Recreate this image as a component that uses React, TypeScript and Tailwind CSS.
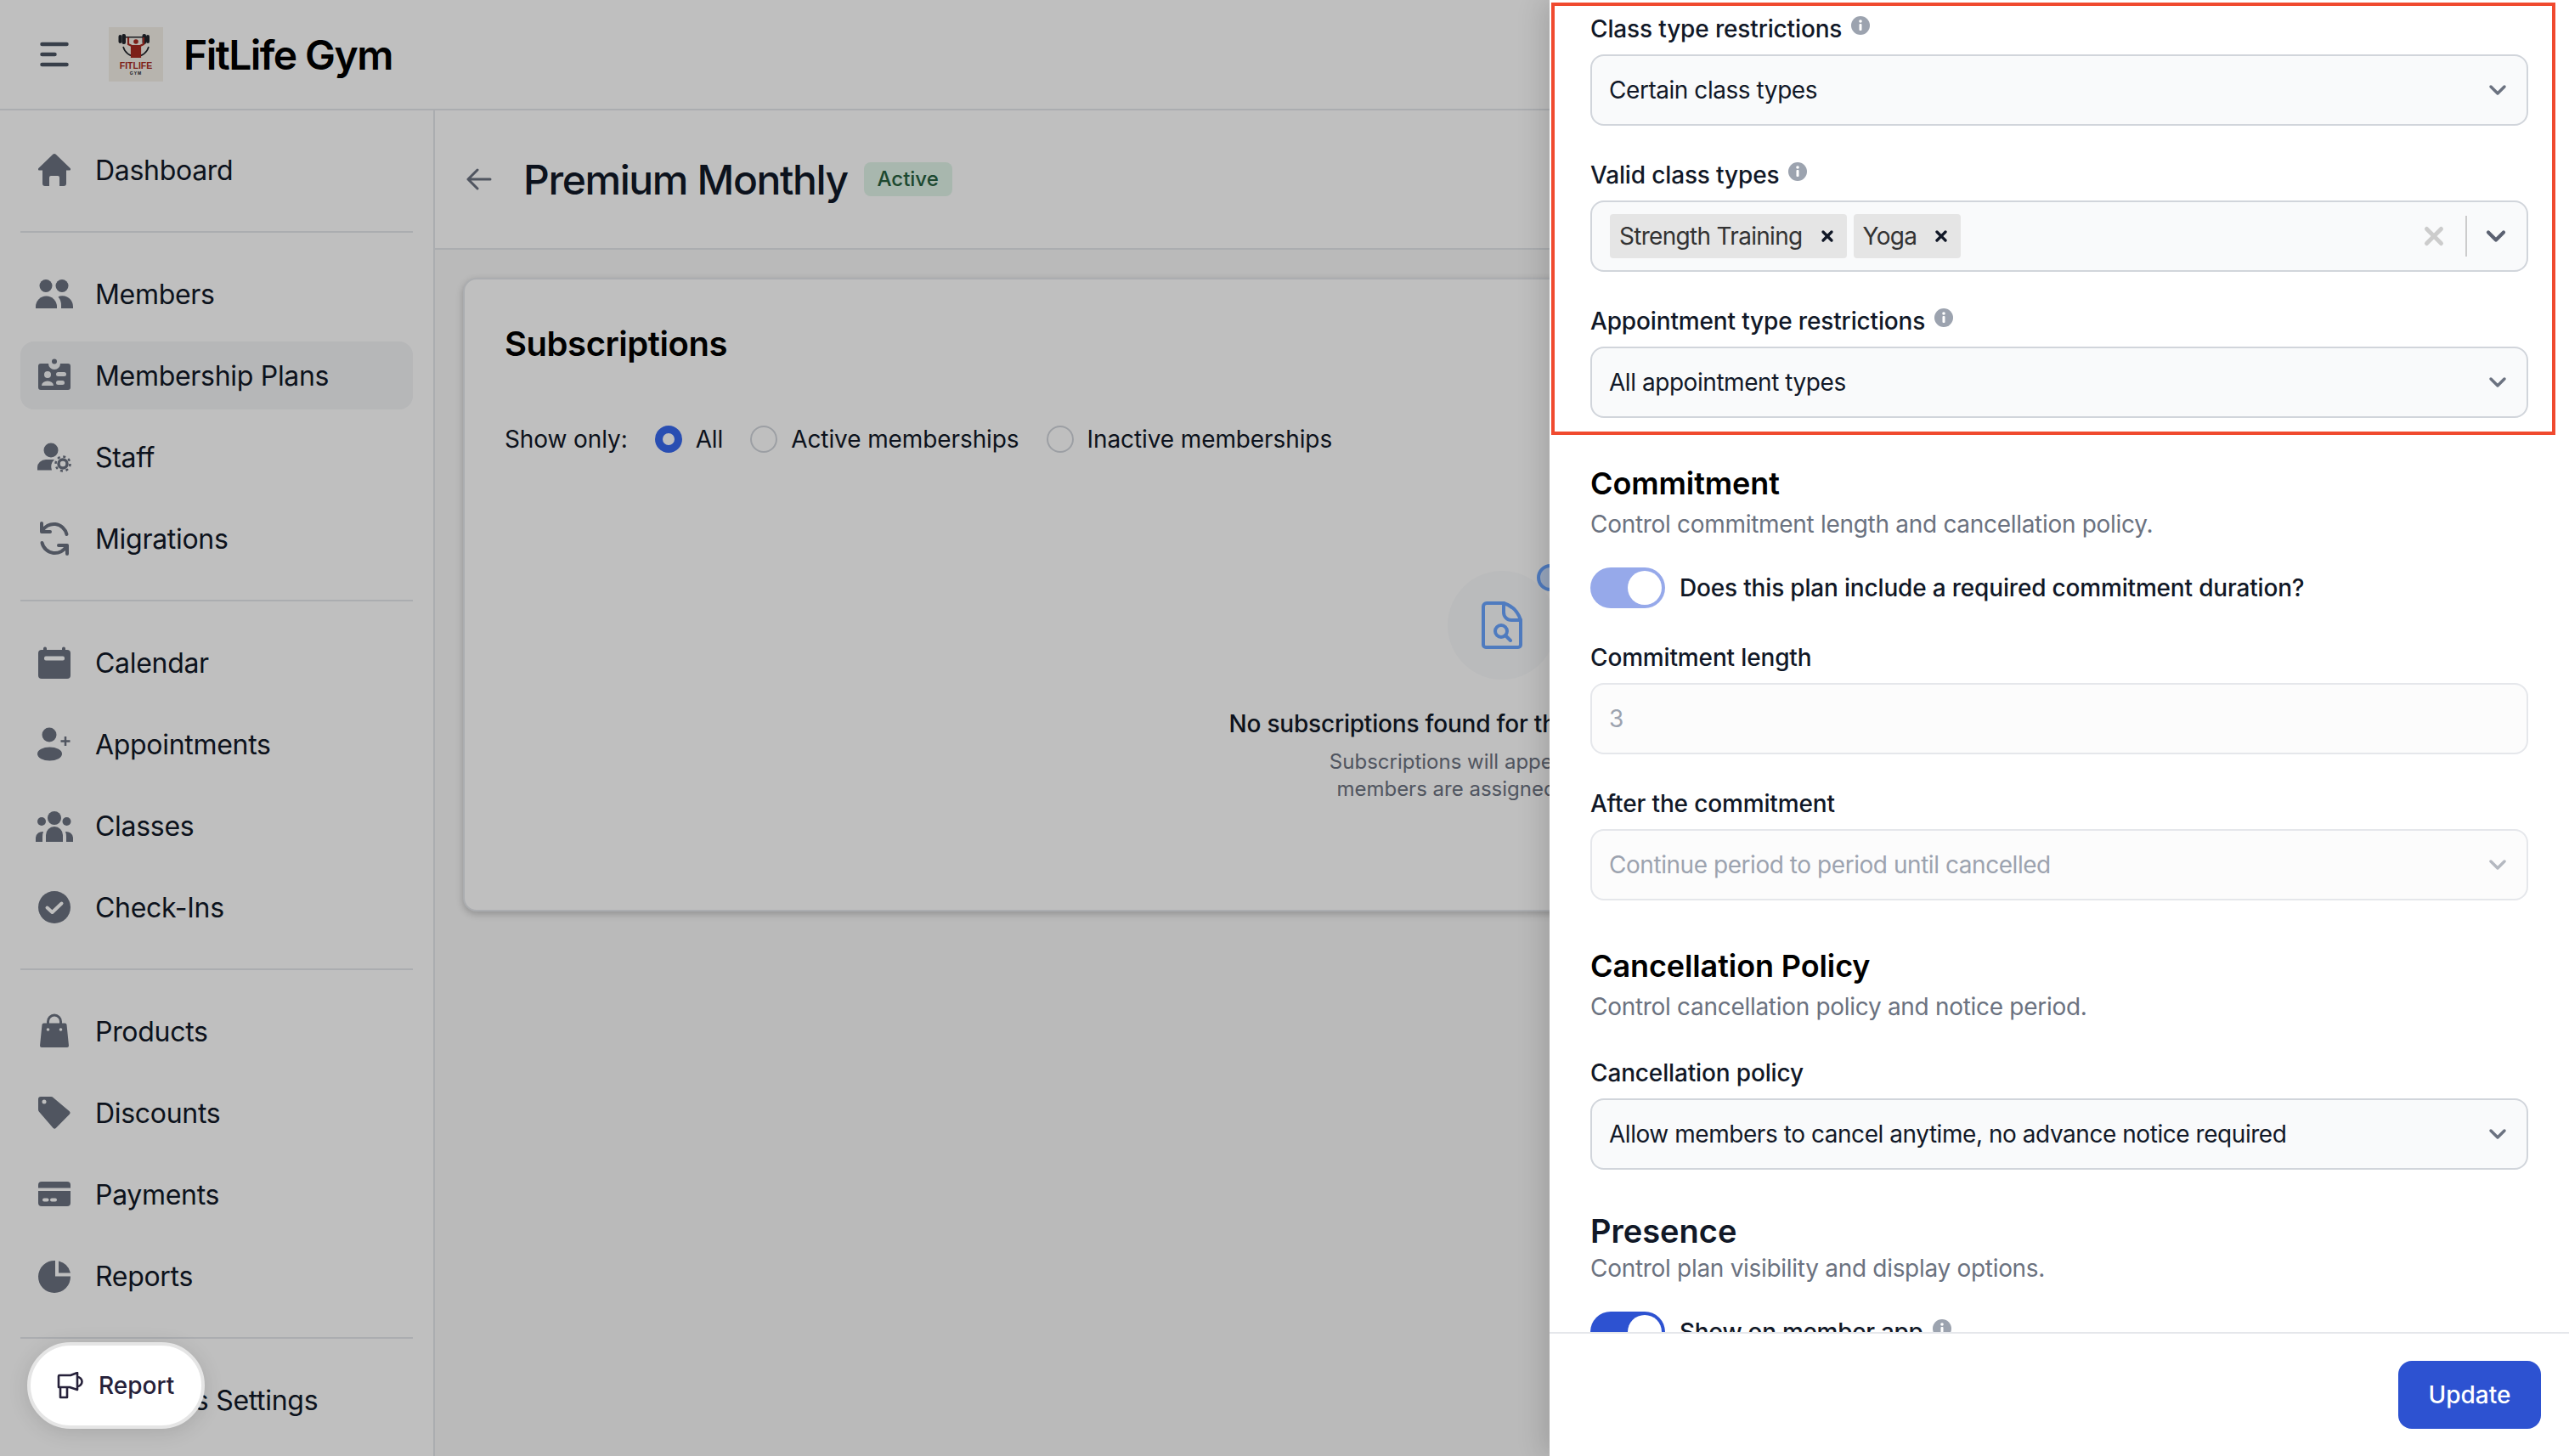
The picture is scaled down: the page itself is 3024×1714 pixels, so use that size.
import { ChevronDown, X } from 'lucide-react'
import type { ReactNode } from 'react'

const ICON = '#6b7280'

function Glyph({ children }: { children: ReactNode }) {
  return (
    <svg width="48" height="48" viewBox="0 0 48 48" fill={ICON} className="shrink-0">
      {children}
    </svg>
  )
}

const HomeIcon = () => (
  <Glyph>
    <path d="M24 5a2 2 0 0 1 1.5.6L42.6 22a1.5 1.5 0 0 1-1 2.6H38V40a3 3 0 0 1-3 3h-5V33a2 2 0 0 0-2-2h-8a2 2 0 0 0-2 2v10h-5a3 3 0 0 1-3-3V24.6H6.4a1.5 1.5 0 0 1-1-2.6L22.5 5.6A2 2 0 0 1 24 5Z" />
  </Glyph>
)

const MembersIcon = () => (
  <Glyph>
    <circle cx="14" cy="14.5" r="7.5" />
    <circle cx="33" cy="14.5" r="7.5" />
    <path d="M2 41v-2a12.5 12.5 0 0 1 25 0v2Z" />
    <path d="M30.500 26.600A12.500 12.500 0 0 1 46 39v2H32v-3a15 15 0 0 0-3.500-10.400Z" />
  </Glyph>
)

const PlansIcon = () => (
  <Glyph>
    <circle cx="24" cy="7.500" r="3" />
    <path d="M8 10h9a7 7 0 0 0 14 0h9a3 3 0 0 1 3 3v25a3 3 0 0 1-3 3H8a3 3 0 0 1-3-3V13a3 3 0 0 1 3-3Z" />
    <circle cx="16" cy="23" r="4" fill="#f3f4f6" />
    <path d="M9 36a7 5.500 0 0 1 14 0Z" fill="#f3f4f6" />
    <rect x="26" y="20" width="12" height="5" rx="2.500" fill="#f3f4f6" />
    <rect x="26" y="30" width="10" height="5" rx="2.500" fill="#f3f4f6" />
  </Glyph>
)

const StaffIcon = () => (
  <Glyph>
    <circle cx="20" cy="16" r="8.500" />
    <path d="M4 39.500V36a10 9 0 0 1 10-9h10a12 12 0 0 0-3 12.500Z" />
    <circle cx="34" cy="32" r="5" fill="none" stroke={ICON} strokeWidth="3.500" />
    <circle cx="34" cy="32" r="8.500" fill="none" stroke={ICON} strokeWidth="2.500" strokeDasharray="3 3.670" />
  </Glyph>
)

const MigrationsIcon = () => (
  <Glyph>
    <g fill="none" stroke={ICON} strokeWidth="4" strokeLinecap="round" strokeLinejoin="round">
      <path d="M9 6v10h10" />
      <path d="M9.500 15.500A15.500 15.500 0 0 1 38.500 19" />
      <path d="M39 42V32H29" />
      <path d="M38.500 32.500A15.500 15.500 0 0 1 9.500 29" />
    </g>
  </Glyph>
)

const CalendarIcon = () => (
  <Glyph>
    <rect x="11" y="5.500" width="4" height="8" rx="2" />
    <rect x="33" y="5.500" width="4" height="8" rx="2" />
    <rect x="5" y="9" width="38" height="34" rx="4" />
    <rect x="12" y="16.500" width="24" height="5" rx="2" fill="#fff" />
  </Glyph>
)

const AppointmentsIcon = () => (
  <Glyph>
    <circle cx="18" cy="13" r="8.500" />
    <ellipse cx="18.500" cy="35.500" rx="14.500" ry="8" />
    <path d="M37 15v11M31.500 20.500h11" stroke={ICON} strokeWidth="2.500" fill="none" />
  </Glyph>
)

const ClassesIcon = () => (
  <Glyph>
    <circle cx="24" cy="15" r="8" />
    <circle cx="9" cy="19" r="5" />
    <circle cx="38.500" cy="19" r="5" />
    <path d="M14 43V35a10 10 0 0 1 20 0v8Z" />
    <path d="M2 43v-5a8 8 0 0 1 9-7 16 16 0 0 0-1 6v6Z" />
    <path d="M46 43v-5a8 8 0 0 0-9-7 16 16 0 0 1 1 6v6Z" />
  </Glyph>
)

const CheckIcon = () => (
  <Glyph>
    <circle cx="24" cy="24" r="19" />
    <path d="M15.500 24.500l6 5.500 11-10.500" fill="none" stroke="#fff" strokeWidth="4" strokeLinecap="round" strokeLinejoin="round" />
  </Glyph>
)

const ProductsIcon = () => (
  <Glyph>
    <path d="M16.500 17v-4.500a7.500 7.500 0 0 1 15 0V17" fill="none" stroke={ICON} strokeWidth="3" />
    <path d="M11.500 14.500h25a2 2 0 0 1 2 1.800L41 41a2 2 0 0 1-2 2H9a2 2 0 0 1-2-2l2.500-24.700a2 2 0 0 1 2-1.800Z" />
    <circle cx="16.500" cy="22" r="1.800" fill="#fff" />
    <circle cx="31.500" cy="22" r="1.800" fill="#fff" />
  </Glyph>
)

const DiscountsIcon = () => (
  <Glyph>
    <path d="M8 5h12a4 4 0 0 1 2.800 1.200l19 16a2.500 2.500 0 0 1 0 3.600L26 41.800a2.500 2.500 0 0 1-3.600 0L6.200 23A4 4 0 0 1 5 20.200V8a3 3 0 0 1 3-3Z" />
    <circle cx="12" cy="11" r="2.500" fill="#fff" />
  </Glyph>
)

const PaymentsIcon = () => (
  <Glyph>
    <path d="M9 9h30a4 4 0 0 1 4 4v3.500H5V13a4 4 0 0 1 4-4Z" />
    <path d="M5 20h38v14a4 4 0 0 1-4 4H9a4 4 0 0 1-4-4Z" />
    <rect x="10" y="28.500" width="7.500" height="4" rx="2" fill="#fff" />
    <rect x="19" y="28.500" width="8" height="4" rx="2" fill="#fff" />
  </Glyph>
)

const ReportsIcon = () => (
  <Glyph>
    <path d="M25 6v18.500h18A19 19 0 1 1 25 6Z" />
    <path d="M29 6.500A19 19 0 0 1 43 20.500H29Z" />
  </Glyph>
)

const SettingsIcon = () => (
  <Glyph>
    <circle cx="24" cy="24" r="12" fill="none" stroke={ICON} strokeWidth="8" />
  </Glyph>
)

const groups = [
  [{ label: 'Dashboard', icon: <HomeIcon /> }],
  [
    { label: 'Members', icon: <MembersIcon /> },
    { label: 'Membership Plans', icon: <PlansIcon />, active: true },
    { label: 'Staff', icon: <StaffIcon /> },
    { label: 'Migrations', icon: <MigrationsIcon /> },
  ],
  [
    { label: 'Calendar', icon: <CalendarIcon /> },
    { label: 'Appointments', icon: <AppointmentsIcon /> },
    { label: 'Classes', icon: <ClassesIcon /> },
    { label: 'Check-Ins', icon: <CheckIcon /> },
  ],
  [
    { label: 'Products', icon: <ProductsIcon /> },
    { label: 'Discounts', icon: <DiscountsIcon /> },
    { label: 'Payments', icon: <PaymentsIcon /> },
    { label: 'Reports', icon: <ReportsIcon /> },
  ],
  [{ label: 'Business Settings', icon: <SettingsIcon /> }],
]

function Logo() {
  return (
    <svg width="64" height="64" viewBox="0 0 64 64" className="shrink-0">
      <rect width="64" height="64" fill="#f5f1e8" />
      <path d="M17 23a15.500 15.500 0 0 0 30 0" fill="none" stroke="#20242b" strokeWidth="1.600" />
      <rect x="18" y="11" width="28" height="1.500" fill="#20242b" />
      <rect x="11.500" y="9" width="4" height="10" rx="2" fill="#20242b" />
      <rect x="15.500" y="8" width="4.500" height="12" rx="2" fill="#20242b" />
      <rect x="39.500" y="8" width="4.500" height="12" rx="2" fill="#20242b" />
      <rect x="44" y="9" width="4" height="10" rx="2" fill="#20242b" />
      <path d="M23 12v8l4 2v13h10V22l4-2v-8" fill="none" stroke="#a72a20" strokeWidth="2.200" />
      <path d="M26.500 21h11l-1.500 14h-8Z" fill="#a72a20" />
      <circle cx="32" cy="17" r="2.800" fill="#a72a20" />
      <text x="32" y="48.500" textAnchor="middle" fontSize="10.500" fontWeight="700" fill="#a72a20" fontFamily="Liberation Sans, sans-serif">
        FITLIFE
      </text>
      <text x="32" y="55.500" textAnchor="middle" fontSize="5" fontWeight="700" letterSpacing="1" fill="#20242b" fontFamily="Liberation Sans, sans-serif">
        GYM
      </text>
    </svg>
  )
}

function Sidebar() {
  return (
    <aside className="w-[512px] shrink-0 border-r-2 border-[#e5e7eb] bg-white px-[24px] pt-[30px]">
      {groups.map((group, i) => (
        <div key={i} className={i > 0 ? 'mt-[32px] border-t-2 border-[#e5e7eb] pt-[32px]' : ''}>
          <div className="flex flex-col gap-[16px]">
            {group.map((item) => (
              <div
                key={item.label}
                className={`flex h-[80px] items-center gap-[24px] rounded-[16px] px-[16px] text-[32px] tracking-[-0.3px] text-[#111827] ${
                  'active' in item && item.active ? 'bg-[#f3f4f6]' : ''
                }`}
              >
                {item.icon}
                <span className="pt-[2px]">{item.label}</span>
              </div>
            ))}
          </div>
        </div>
      ))}
    </aside>
  )
}

function Radio({ label, checked }: { label: string; checked?: boolean }) {
  return (
    <div className="flex items-center gap-[16px]">
      <span
        className={
          checked
            ? 'h-[32px] w-[32px] rounded-full border-[9px] border-[#3768ee] bg-white'
            : 'h-[32px] w-[32px] rounded-full border-2 border-[#d1d5db] bg-white'
        }
      />
      <span>{label}</span>
    </div>
  )
}

function Subscriptions() {
  return (
    <div className="ml-[33px] mr-[33px] mt-[33px] h-[746px] rounded-[16px] border-2 border-[#e5e7eb] bg-white px-[47px] pt-[48px] shadow-[0_3px_8px_rgba(0,0,0,0.22)]">
      <h2 className="text-[40px] font-semibold leading-[56px] tracking-[-0.45px] text-black">Subscriptions</h2>
      <div className="mt-[64px] flex h-[40px] items-center gap-[32px] text-[28px] tracking-[-0.1px] text-[#111827]">
        <span>Show only:</span>
        <Radio label="All" checked />
        <Radio label="Active memberships" />
        <Radio label="Inactive memberships" />
      </div>
      <div className="mt-[135px] flex flex-col items-center">
        <div className="relative flex h-[128px] w-[128px] items-center justify-center rounded-full bg-[#f9fafb]">
          <svg width="48" height="56" viewBox="0 0 48 56" fill="none" stroke="#6aa5ff" strokeWidth="4" strokeLinejoin="round" strokeLinecap="round">
            <path d="M6 2h20c10 3 17 11 20 20v29a3 3 0 0 1-3 3H5a3 3 0 0 1-3-3V6a4 4 0 0 1 4-4Z" />
            <path d="M26 2v11a9 9 0 0 0 9 9h11" />
            <circle cx="23" cy="35" r="7" strokeWidth="4" />
            <path d="M28 40l6 6" />
          </svg>
          <span className="absolute left-[105px] top-[-8px] h-[32px] w-[32px] rounded-full border-4 border-[#6aa5ff] bg-[#cde0ff]" />
        </div>
        <p className="mt-[32px] text-[28px] font-medium leading-[40px] tracking-[-0.2px] text-[#111827]">
          No subscriptions found for this membership plan
        </p>
        <p className="mt-[9px] text-center text-[24px] leading-[32px] text-[#6b7280]">
          Subscriptions will appear here once
          <br />
          members are assigned to this plan
        </p>
      </div>
    </div>
  )
}

function InfoDot({ className = '' }: { className?: string }) {
  return (
    <svg width="24" height="24" viewBox="0 0 24 24" className={`mb-[8px] shrink-0 ${className}`}>
      <circle cx="12" cy="12" r="11" fill="#9ca3af" />
      <rect x="10.500" y="10" width="3" height="8" rx="1" fill="#fff" />
      <circle cx="12" cy="7" r="1.800" fill="#fff" />
    </svg>
  )
}

function Label({ text, info }: { text: string; info?: boolean }) {
  return (
    <div className="flex h-[40px] items-center gap-[10px] pb-[4px] text-[28px] font-medium leading-[40px] tracking-[-0.15px] text-[#111827]">
      <span>{text}</span>
      {info && <InfoDot />}
    </div>
  )
}

function Select({ value, disabled }: { value: string; disabled?: boolean }) {
  return (
    <div
      className={`mt-[8px] flex h-[84px] items-center justify-between rounded-[16px] border-2 pl-[20px] pr-[18px] text-[28px] tracking-[-0.45px] ${
        disabled ? 'border-[#e5e7eb] bg-[#fcfcfc] text-[#9ca3af]' : 'border-[#d1d5db] bg-[#f9fafb] text-[#111827]'
      }`}
    >
      <span>{value}</span>
      <ChevronDown size={32} strokeWidth={2.6} className={disabled ? 'text-[#b4b8c0]' : 'text-[#6b7280]'} />
    </div>
  )
}

function Tag({ text }: { text: string }) {
  return (
    <div className="flex h-[52px] items-center gap-[19px] rounded-[4px] bg-[#e5e5e5] pl-[11px] pr-[13px] text-[28px] tracking-[-0.7px] text-[#333333]">
      <span>{text}</span>
      <X size={20} strokeWidth={4} className="text-[#111827]" />
    </div>
  )
}

function SectionHead({ title, text }: { title: string; text: string }) {
  return (
    <>
      <h3 className="text-[36px] font-semibold leading-[48px] tracking-[-0.1px] text-black">{title}</h3>
      <p className="mt-[4px] text-[28px] leading-[40px] tracking-[-0.3px] text-[#6b7280]">{text}</p>
    </>
  )
}

function Toggle({ color }: { color: string }) {
  return (
    <span className={`flex h-[48px] w-[88px] shrink-0 items-center justify-end rounded-full pr-[4px] ${color}`}>
      <span className="h-[40px] w-[40px] rounded-full bg-white" />
    </span>
  )
}

function Panel() {
  return (
    <div className="absolute right-0 top-0 flex h-full w-[1200px] flex-col bg-white shadow-[-8px_0_30px_rgba(0,0,0,0.14)]">
      <div className="min-h-0 flex-1 overflow-hidden px-[48px] pt-[16px]">
        <Label text="Class type restrictions" info />
        <Select value="Certain class types" />

        <div className="mt-[40px]">
          <Label text="Valid class types" info />
          <div className="mt-[8px] flex h-[84px] items-center gap-[8px] rounded-[16px] border-2 border-[#d1d5db] bg-[#f9fafb] pl-[21px] pr-[20px]">
            <Tag text="Strength Training" />
            <Tag text="Yoga" />
            <div className="ml-auto flex items-center">
              <X size={34} strokeWidth={3.5} className="mr-[1px] text-[#cccccc]" />
              <span className="ml-[19px] h-[48px] w-[2px] bg-[#cccccc]" />
              <ChevronDown size={36} strokeWidth={2.8} className="ml-[16px] mr-[-2px] text-[#5b6171]" />
            </div>
          </div>
        </div>

        <div className="mt-[40px]">
          <Label text="Appointment type restrictions" info />
          <Select value="All appointment types" />
        </div>

        <div className="mt-[53px]">
          <SectionHead title="Commitment" text="Control commitment length and cancellation policy." />
        </div>
        <div className="mt-[31px] flex items-center gap-[17px] text-[28px] font-medium tracking-[-0.18px] text-[#111827]">
          <Toggle color="bg-[#96a9ea]" />
          <span>Does this plan include a required commitment duration?</span>
        </div>

        <div className="mt-[40px]">
          <Label text="Commitment length" />
          <div className="mt-[8px] flex h-[84px] items-center rounded-[16px] border-2 border-[#e5e7eb] bg-[#fcfcfc] pl-[20px] text-[28px] text-[#9ca3af]">
            3
          </div>
        </div>

        <div className="mt-[40px]">
          <Label text="After the commitment" />
          <Select value="Continue period to period until cancelled" disabled />
        </div>

        <div className="mt-[53px]">
          <SectionHead title="Cancellation Policy" text="Control cancellation policy and notice period." />
        </div>
        <div className="mt-[40px]">
          <Label text="Cancellation policy" />
          <Select value="Allow members to cancel anytime, no advance notice required" />
        </div>

        <h3 className="mt-[48px] text-[38px] font-semibold leading-[48px] text-[#111827]">Presence</h3>
        <p className="text-[28px] leading-[40px] tracking-[-0.3px] text-[#6b7280]">Control plan visibility and display options.</p>
        <div className="mt-[31px] flex items-center gap-[17px] text-[28px] font-medium tracking-[-0.3px] text-[#111827]">
          <Toggle color="bg-[#2d52d1]" />
          <span>Show on member app</span>
          <InfoDot className="ml-[-7px]" />
        </div>
      </div>
      <div className="flex h-[146px] shrink-0 items-start justify-end border-t-2 border-[#e5e7eb] pr-[33px] pt-[32px]">
        <button className="h-[80px] w-[168px] rounded-[16px] bg-[#2d52d1] text-[28px] font-medium text-white">Update</button>
      </div>
      <div className="absolute left-[2px] top-[3px] h-[509px] w-[1182px] border-4 border-[#f04a2f]" />
    </div>
  )
}

export default function App() {
  return (
    <div className="relative h-[1714px] w-[3024px] overflow-hidden bg-white font-[Inter,sans-serif]">
      <header className="flex h-[130px] items-center border-b-2 border-[#e5e7eb] pl-[47px]">
        <svg width="34" height="30" viewBox="0 0 34 30" fill="none" stroke="#4b5563" strokeWidth="4.500" strokeLinecap="round">
          <path d="M2.500 3h29M2.500 15h15M2.500 27h29" />
        </svg>
        <div className="ml-[47px]">
          <Logo />
        </div>
        <span className="ml-[24px] pt-[2px] text-[48px] font-semibold tracking-[-1.55px] text-black">FitLife Gym</span>
      </header>

      <div className="flex h-[1584px]">
        <Sidebar />
        <main className="min-w-0 flex-1 bg-[#f8f8f8]">
          <div className="flex h-[164px] items-center border-b-2 border-[#e5e7eb] bg-white pl-[37px]">
            <svg width="30" height="26" viewBox="0 0 30 26" fill="none" stroke="#6b7280" strokeWidth="3" strokeLinecap="round" strokeLinejoin="round">
              <path d="M28 13H2M13 2L2 13l11 11" />
            </svg>
            <h1 className="ml-[37px] pt-[2px] text-[48px] font-medium tracking-[-1.4px] text-[#111827]">Premium Monthly</h1>
            <span className="ml-[19px] flex h-[40px] w-[104px] items-center justify-center rounded-[8px] bg-[#e0f5e8] text-[24px] font-medium text-[#27613f]">
              Active
            </span>
          </div>
          <Subscriptions />
        </main>
      </div>

      <div className="absolute inset-0 bg-black/25" />
      <Panel />

      <div className="absolute left-[32px] top-[1580px] flex h-[102px] w-[209px] items-center gap-[17px] rounded-full border-4 border-[#e5e5e5] bg-white pl-[31px] text-[28px] font-medium text-[#26213a] shadow-[0_4px_24px_rgba(0,0,0,0.12)]">
        <svg width="32" height="32" viewBox="0 0 32 32" fill="none" stroke="#26213a" strokeWidth="2.600" strokeLinejoin="round">
          <path d="M3 4h13l8-3v20l-9-3H2V5a1 1 0 0 1 1-1Z" />
          <path d="M4 18v12h8V18" />
          <path d="M24 6a5.500 5.500 0 0 1 0 11" />
        </svg>
        <span>Report</span>
      </div>
    </div>
  )
}
